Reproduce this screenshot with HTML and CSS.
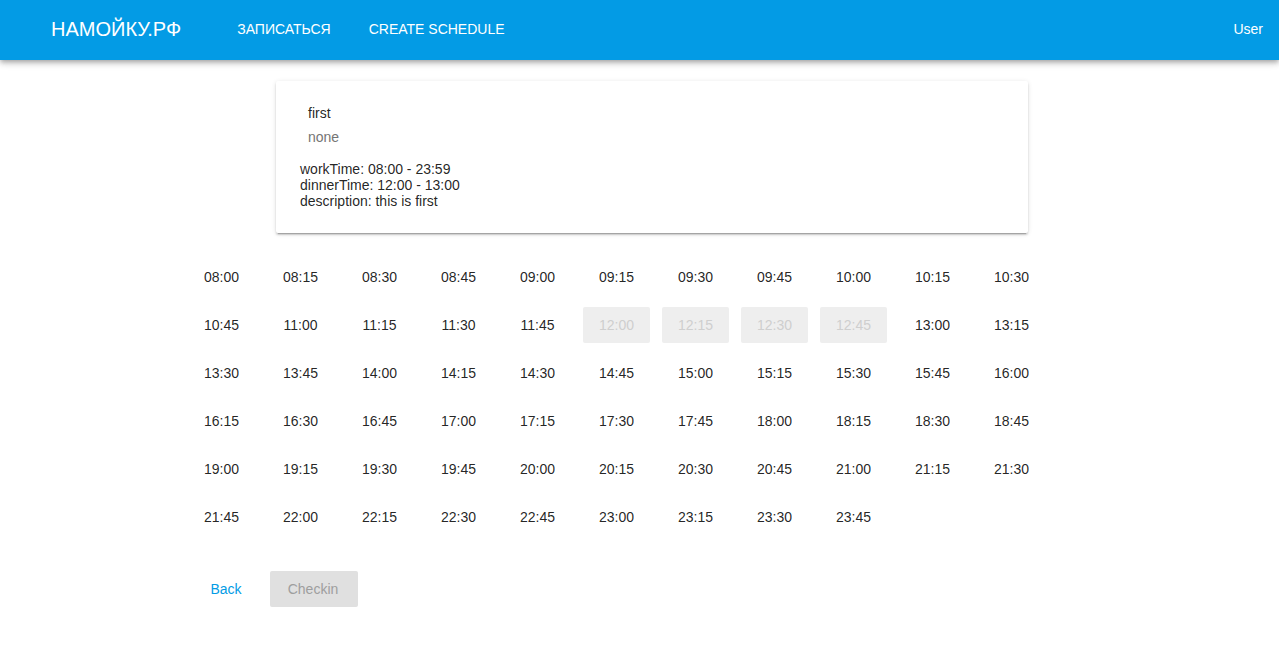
FILE: index.html
```html
<!DOCTYPE html>
<html lang="ru">
<head>
<meta charset="utf-8">
<title>НАМОЙКУ.РФ</title>
<link rel="stylesheet" href="styles.css">
</head>
<body>
<header class="appbar">
  <div class="logo">НАМОЙКУ.РФ</div>
  <nav class="nav">
    <a class="nav-link">Записаться</a>
    <a class="nav-link">Create schedule</a>
  </nav>
  <div class="user">User</div>
</header>
<main class="content">
  <section class="card">
    <div class="card-title">first</div>
    <div class="card-sub">none</div>
    <div class="card-details">
      <div>workTime: 08:00 - 23:59</div>
      <div>dinnerTime: 12:00 - 13:00</div>
      <div>description: this is first</div>
    </div>
  </section>
  <div class="slots">
    <button class="slot">08:00</button><button class="slot">08:15</button><button class="slot">08:30</button><button class="slot">08:45</button><button class="slot">09:00</button><button class="slot">09:15</button><button class="slot">09:30</button><button class="slot">09:45</button><button class="slot">10:00</button><button class="slot">10:15</button><button class="slot">10:30</button>
    <button class="slot">10:45</button><button class="slot">11:00</button><button class="slot">11:15</button><button class="slot">11:30</button><button class="slot">11:45</button><button class="slot disabled">12:00</button><button class="slot disabled">12:15</button><button class="slot disabled">12:30</button><button class="slot disabled">12:45</button><button class="slot">13:00</button><button class="slot">13:15</button>
    <button class="slot">13:30</button><button class="slot">13:45</button><button class="slot">14:00</button><button class="slot">14:15</button><button class="slot">14:30</button><button class="slot">14:45</button><button class="slot">15:00</button><button class="slot">15:15</button><button class="slot">15:30</button><button class="slot">15:45</button><button class="slot">16:00</button>
    <button class="slot">16:15</button><button class="slot">16:30</button><button class="slot">16:45</button><button class="slot">17:00</button><button class="slot">17:15</button><button class="slot">17:30</button><button class="slot">17:45</button><button class="slot">18:00</button><button class="slot">18:15</button><button class="slot">18:30</button><button class="slot">18:45</button>
    <button class="slot">19:00</button><button class="slot">19:15</button><button class="slot">19:30</button><button class="slot">19:45</button><button class="slot">20:00</button><button class="slot">20:15</button><button class="slot">20:30</button><button class="slot">20:45</button><button class="slot">21:00</button><button class="slot">21:15</button><button class="slot">21:30</button>
    <button class="slot">21:45</button><button class="slot">22:00</button><button class="slot">22:15</button><button class="slot">22:30</button><button class="slot">22:45</button><button class="slot">23:00</button><button class="slot">23:15</button><button class="slot">23:30</button><button class="slot">23:45</button>
  </div>
  <div class="actions">
    <button class="btn-text">Back</button>
    <button class="btn-contained">Checkin</button>
  </div>
</main>
</body>
</html>
```
FILE: styles.css
```css
* { box-sizing: border-box; }
body {
  margin: 0;
  font-family: "Liberation Sans", Arial, sans-serif;
  color: rgba(0,0,0,0.87);
  background: #fff;
}
.appbar {
  height: 60px;
  background: #039be5;
  color: #fff;
  display: flex;
  align-items: center;
  padding: 0 16px 3px 51px;
  box-shadow: 0 2px 4px -1px rgba(0,0,0,0.2), 0 4px 5px 0 rgba(0,0,0,0.14), 0 1px 10px 0 rgba(0,0,0,0.12);
  position: relative;
}
.logo {
  font-size: 20px;
  line-height: 24px;
  margin-right: 56px;
}
.nav {
  display: flex;
  gap: 38px;
  flex: 1;
}
.nav-link {
  font-size: 14px;
  text-transform: uppercase;
  color: #fff;
  line-height: 20px;
}
.user {
  font-size: 14px;
  line-height: 20px;
}
.content {
  margin-left: 188px;
  width: 857px;
  padding-top: 21px;
}
.card {
  margin-left: 88px;
  width: 752px;
  padding: 20px 24px 24px 24px;
  background: #fff;
  border-radius: 2px;
  box-shadow: 0 3px 1px -2px rgba(0,0,0,0.2), 0 2px 2px 0 rgba(0,0,0,0.14), 0 1px 5px 0 rgba(0,0,0,0.12);
}
.card-title, .card-sub {
  font-size: 14px;
  line-height: 24px;
  padding-left: 8px;
}
.card-sub { color: #757575; }
.card-details {
  margin-top: 12px;
  font-size: 14px;
  line-height: 16px;
}
.slots {
  margin-top: 26px;
  display: grid;
  grid-template-columns: repeat(11, 67px);
  column-gap: 12px;
  row-gap: 12px;
}
.slot {
  height: 36px;
  border: 0;
  border-radius: 2px;
  background: transparent;
  font-family: inherit;
  font-size: 14px;
  color: rgba(0,0,0,0.87);
  padding: 0;
}
.slot.disabled {
  background: #eeeeee;
  color: #cfcfcf;
}
.actions {
  margin-top: 36px;
  display: flex;
  gap: 12px;
  padding-left: 6px;
}
.btn-text {
  height: 36px;
  min-width: 64px;
  border: 0;
  background: transparent;
  color: #039be5;
  font-family: inherit;
  font-size: 14px;
  padding: 0 8px;
}
.btn-contained {
  height: 36px;
  width: 88px;
  border: 0;
  border-radius: 2px;
  background: #e0e0e0;
  color: #9e9e9e;
  font-family: inherit;
  font-size: 14px;
  padding: 0 2px 0 0;
}
```
